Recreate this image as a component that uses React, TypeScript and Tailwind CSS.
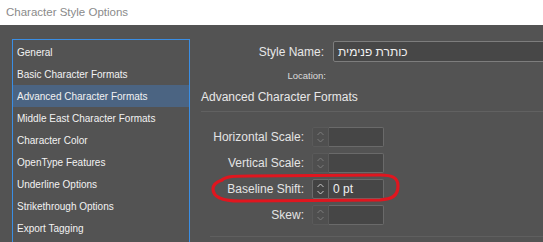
const sections = [
  "General",
  "Basic Character Formats",
  "Advanced Character Formats",
  "Middle East Character Formats",
  "Character Color",
  "OpenType Features",
  "Underline Options",
  "Strikethrough Options",
  "Export Tagging",
];

function Spinner({ active }: { active?: boolean }) {
  return (
    <div
      className={
        active
          ? "flex h-[20px] w-[17px] items-center justify-center rounded-l-[2px] border border-[#6b6b6b] bg-[#434343]"
          : "flex h-[20px] w-[17px] items-center justify-center rounded-l-[2px] border border-[#5a5a5a] bg-[#4f4f4f]"
      }
    >
      <svg width="9" height="14" viewBox="0 0 9 14" fill="none">
        <path
          d="M1.5 5 L4.5 2 L7.5 5 M1.5 9 L4.5 12 L7.5 9"
          stroke={active ? "#c8c8c8" : "#7c7c7c"}
          strokeWidth="1"
        />
      </svg>
    </div>
  );
}

function Field({ label, value, active }: { label: string; value?: string; active?: boolean }) {
  return (
    <div className="flex h-[20px] items-center">
      <div className="w-[104px] pr-[1px] text-right text-[12px] text-[#e4e4e4]">{label}</div>
      <div className="ml-[7px] flex">
        <Spinner active={active} />
        <div className="flex h-[20px] w-[55px] items-center rounded-r-[2px] border border-l-0 border-[#6a6a6a] bg-[#464646] pl-[4px] text-[12px] text-[#f0f0f0]">
          {value}
        </div>
      </div>
    </div>
  );
}

export default function App() {
  return (
    <div className="relative flex h-[242px] w-[543px] flex-col overflow-hidden bg-[#535353] font-['Liberation_Sans',Arial,sans-serif]">
      <div className="flex h-[25px] shrink-0 items-center bg-white pl-[6px] text-[11.5px] text-[#8a8a8a]">
        Character Style Options
      </div>
      <div className="flex shrink-0 pl-[12px] pt-[14px]">
        <div className="h-[210px] w-[178px] shrink-0 border border-[#3a8ee4] pt-[1px]">
          {sections.map((s, i) => (
            <div
              key={s}
              className={
                i === 2
                  ? "flex h-[22px] items-center bg-[#4b6482] pl-[4px] text-[10px] text-[#f2f2f2]"
                  : "flex h-[22px] items-center pl-[4px] text-[10px] text-[#f2f2f2]"
              }
            >
              {s}
            </div>
          ))}
        </div>
        <div className="flex min-w-0 flex-1 flex-col pl-[11px] pt-[2px]">
          <div className="flex items-center">
            <div className="w-[123px] shrink-0 text-right text-[12px] text-[#e8e8e8]">Style Name:</div>
            <div className="ml-[9px] flex h-[21px] w-[240px] shrink-0 items-center rounded-[2px] border border-[#7d7d7d] bg-[#474747] pl-[4px] text-[12px] text-[#f0f0f0]">
              <span dir="rtl">כותרת פנימית</span>
            </div>
          </div>
          <div className="mt-[7px] w-[125px] text-right text-[9.5px] text-[#dcdcdc]">Location:</div>
          <div className="mt-[5px] text-[12px] text-[#e8e8e8]">Advanced Character Formats</div>
          <div className="mr-[-20px] mt-[5px] h-px bg-[#616161]" />
          <div className="mt-[15px] flex flex-col gap-[6px]">
            <Field label="Horizontal Scale:" />
            <Field label="Vertical Scale:" />
            <Field label="Baseline Shift:" value="0 pt" active />
            <Field label="Skew:" />
          </div>
          <div className="ml-[9px] mr-[-20px] mt-[11px] h-px bg-[#5f5f5f]" />
        </div>
      </div>
      <svg className="pointer-events-none absolute left-0 top-0" width="543" height="242">
        <path
          d="M222 180 C226 176 236 176 250 176 L380 175 C393 175 398 178 398 186 C398 196 392 199 380 200 L240 201 C222 201 213 197 213 189 C213 185 216 182 222 180"
          fill="none"
          stroke="#e0161f"
          strokeWidth="3.2"
          strokeLinecap="round"
        />
      </svg>
    </div>
  );
}
